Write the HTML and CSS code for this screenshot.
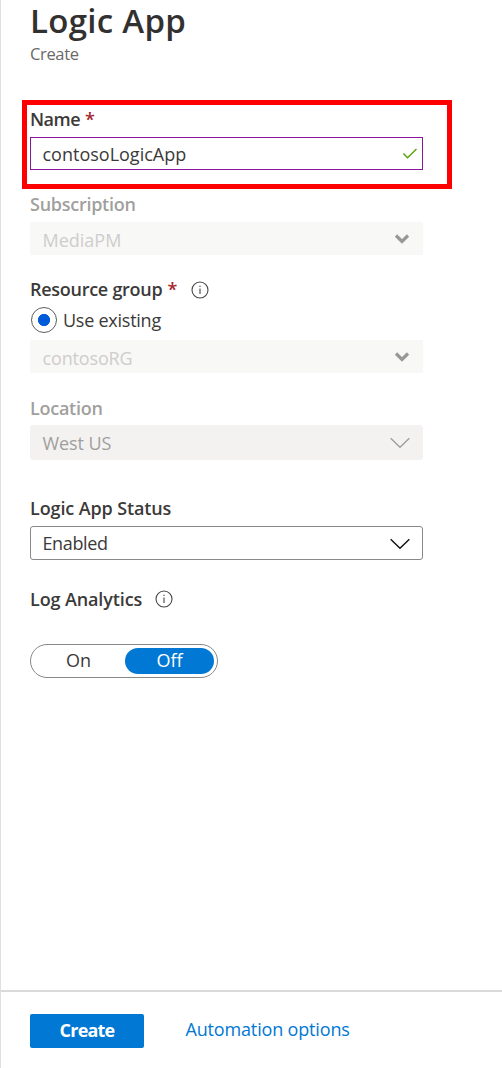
FILE: index.html
```html
<!DOCTYPE html>
<html lang="en">
<head>
<meta charset="utf-8">
<title>Logic App - Create</title>
<link rel="stylesheet" href="styles.css">
</head>
<body>
<main class="blade">
  <header class="header">
    <h1 class="title">Logic App</h1>
    <p class="subtitle">Create</p>
  </header>
  <form class="form">
    <section class="highlight">
      <label class="label"><span class="t-name">Name</span><span class="required">*</span></label>
      <div class="field field-name"><span class="t-app">contosoLogicApp</span>
        <svg class="check" width="16" height="12" viewBox="0 0 16 12"><path d="M1.5 5.5 5.5 9.7 14.5 1"/></svg>
      </div>
    </section>
    <section class="group subscription">
      <label class="label muted"><span class="t-sub">Subscription</span></label>
      <div class="field locked"><span class="t-media">MediaPM</span>
        <svg class="arrow-bold" width="16" height="12" viewBox="0 0 16 12"><path d="M2 2.5 8 8.5 14 2.5"/></svg>
      </div>
    </section>
    <section class="group resource">
      <label class="label"><span class="t-res">Resource group</span><span class="required">*</span>
        <svg class="info" width="18" height="18" viewBox="0 0 18 18"><circle cx="9" cy="9" r="8"/><path d="M9 7.5V13M9 4.7V6"/></svg>
      </label>
      <div class="radio-row"><span class="radio"></span><span class="t-use">Use existing</span></div>
      <div class="field locked"><span class="t-rg">contosoRG</span>
        <svg class="arrow-bold" width="16" height="12" viewBox="0 0 16 12"><path d="M2 2.5 8 8.5 14 2.5"/></svg>
      </div>
    </section>
    <section class="group location">
      <label class="label muted"><span class="t-loc">Location</span></label>
      <div class="field disabled"><span class="t-west">West US</span>
        <svg class="arrow" width="20" height="12" viewBox="0 0 20 12"><path d="M.7 1.2 10 10.3 19.3 1.2"/></svg>
      </div>
    </section>
    <section class="group status">
      <label class="label"><span class="t-status">Logic App Status</span></label>
      <div class="field select"><span class="t-enabled">Enabled</span>
        <svg class="arrow" width="20" height="12" viewBox="0 0 20 12"><path d="M.7 1.2 10 10.3 19.3 1.2"/></svg>
      </div>
    </section>
    <section class="group analytics">
      <label class="label"><span class="t-log">Log Analytics</span>
        <svg class="info" width="18" height="18" viewBox="0 0 18 18"><circle cx="9" cy="9" r="8"/><path d="M9 7.5V13M9 4.7V6"/></svg>
      </label>
      <div class="toggle"><span class="option">On</span><span class="option active">Off</span></div>
    </section>
  </form>
  <footer class="footer">
    <button class="create" type="button">Create</button>
    <a class="link">Automation options</a>
  </footer>
</main>
</body>
</html>
```
FILE: styles.css
```css
* { box-sizing: border-box; }
body {
  margin: 0;
  background: #fff;
  color: #3b3a39;
  font: 400 18px/24px "Open Sans", "Noto Sans", sans-serif;
}
.blade {
  display: flex;
  flex-direction: column;
  height: 1068px;
  border-left: 1px solid #dfdfdf;
}
.header { height: 100px; padding-left: 29px; }
.title { margin: 0; font-size: 33px; line-height: 42px; font-weight: 600; letter-spacing: .3px; color: #323130; }
.subtitle { margin: 0; font-size: 16.5px; line-height: 24px; letter-spacing: -.35px; color: #6b6967; }
.form { flex: 1; }
.highlight {
  width: 430px;
  height: 89px;
  margin-left: 21px;
  padding: 2px 0 0 3px;
  border: 5px solid #f00;
}
.group { width: 393px; margin-left: 29px; }
.label { display: flex; align-items: center; height: 24px; font-weight: 600; white-space: nowrap; }
.t-name { letter-spacing: -.5px; }
.t-sub, .t-res, .t-loc { letter-spacing: -.27px; }
.t-status, .t-log { letter-spacing: -.12px; }
.t-use { letter-spacing: -.25px; }
.t-enabled { letter-spacing: -.38px; }
.t-west { letter-spacing: -.1px; }
.t-rg { letter-spacing: -.15px; }
.t-media, .t-rg { padding-top: 2px; }
.muted { color: #a19f9d; }
.required { margin-left: 5px; color: #a4262c; }
.info { margin: 1px 0 0 13.5px; fill: none; stroke: #484644; stroke-width: 1.1; }
.field {
  display: flex;
  align-items: center;
  justify-content: space-between;
  width: 393px;
  height: 33px;
  padding: 0 12px 0 11.5px;
  border: 1px solid transparent;
  white-space: nowrap;
}
.field svg { fill: none; stroke: currentColor; }
.field-name { margin-top: 6px; padding-right: 4px; border-color: #881798; }
.field .check { stroke: #57a300; stroke-width: 1.4; }
.subscription { margin-top: 3px; }
.subscription .field { margin-top: 6px; }
.locked { background: #f8f8f7; color: #cfcdcc; }
.field .arrow-bold { stroke: #989898; stroke-width: 3.2; }
.resource { margin-top: 22px; }
.radio-row { display: flex; align-items: center; gap: 6px; height: 26px; margin: 6px 0 7px 1px; }
.radio {
  width: 26px;
  height: 26px;
  border: 1px solid #605e5c;
  border-radius: 50%;
  background: radial-gradient(circle, #015cda 5.7px, #fff 6.4px);
}
.location { margin-top: 23px; }
.location .field { height: 35px; margin-top: 5px; }
.disabled { border-radius: 3px; background: #f3f2f1; color: #a19f9d; }
.field .arrow { margin-top: 1px; stroke-width: 1.4; }
.status { margin-top: 36px; }
.select { height: 34px; margin-top: 6px; border-color: #8a8886; border-radius: 3px; }
.select .arrow { color: #111; }
.analytics { margin-top: 27px; }
.analytics .info { margin: 0 0 0 12.5px; }
.toggle {
  display: flex;
  width: 188px;
  height: 34px;
  margin-top: 33px;
  padding: 3px;
  border: 1px solid #8a8886;
  border-radius: 17px;
}
.option { width: 91px; padding-right: 2px; line-height: 25px; text-align: center; }
.active { width: 89px; padding: 0; border-radius: 13px; background: #0078d4; color: #fff; }
.footer {
  display: flex;
  align-items: flex-start;
  height: 78px;
  padding: 22px 0 0 29px;
  border-top: 2px solid #dadada;
}
.create {
  width: 114px;
  height: 34px;
  padding: 0 0 3px;
  border: 0;
  border-radius: 2px;
  background: #0078d4;
  color: #fff;
  font: inherit;
  font-weight: 700;
  letter-spacing: -.8px;
}
.link { margin: 3px 0 0 41.5px; color: #0078d4; letter-spacing: -.16px; white-space: nowrap; }
```
